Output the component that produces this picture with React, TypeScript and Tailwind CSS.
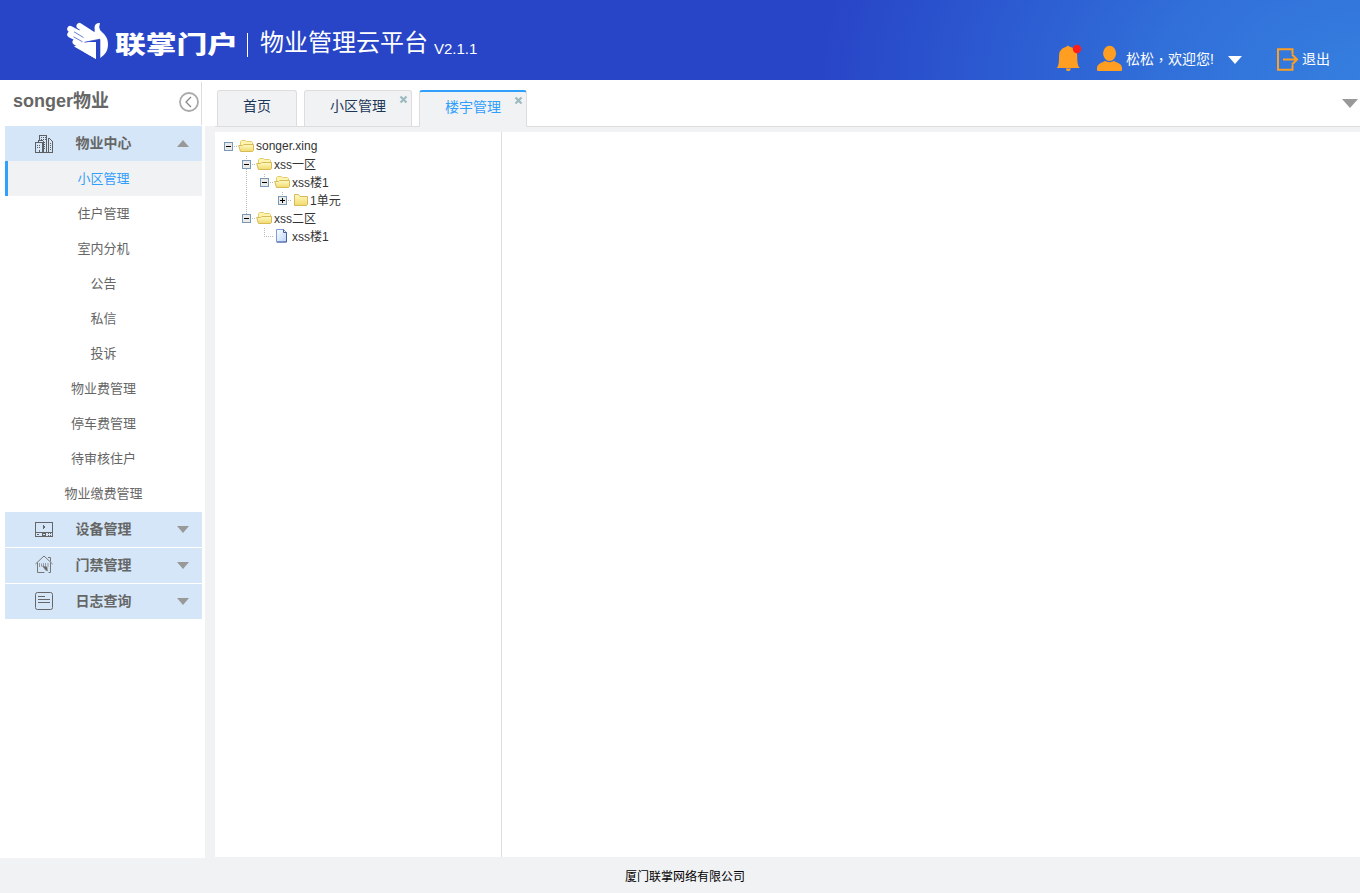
import React from "react";

const menu = ["小区管理", "住户管理", "室内分机", "公告", "私信", "投诉", "物业费管理", "停车费管理", "待审核住户", "物业缴费管理"];

function HandLogo() {
  return (
    <svg className="h-[37px] w-[42px] shrink-0" viewBox="0 0 42 37" fill="#fff">
      <path d="M12.500 4L28 14M3.200 7L22 17M3.200 12.500L22 22M8.500 20L24 28" stroke="#fff" strokeWidth="6" strokeLinecap="round" />
      <path d="M14 6L25.500 12Q28.500 11 27.500 6 27.500 .8 33 1 31.500 5 33 8C37 12 41 15 41 22 41 29 38 33 33 36V17L29 20V37L7 24.500 17 20 9 14Z" />
      <path d="M7 9.800l9.500 5.700M6.500 14.800l9 5" stroke="#2845c7" strokeWidth=".7" />
      <path d="M18.500 20L33.300 17.200v18.600l-3.300.9V20Z" fill="#2845c7" />
      <path d="M17 20.500l12 .5v16l-12-7z" />
      <path d="M17.500 20.300L33 17.200" stroke="#2845c7" strokeWidth=".8" />
    </svg>
  );
}

function BuildingIcon() {
  return (
    <svg className="size-[18px]" viewBox="0 0 18 18" fill="none" stroke="#5c5f63" shapeRendering="crispEdges">
      <path d="M.5 17.500V7.500h7v10zM3.500 7V5.500h4M4.500 5V.5h7v17M8.500 17V6M13.500 17V2.500M14 3.500h1M15 4.500h1M16 5.500h1M17.500 6v11.500H8" />
      <path d="M6 2.500h5M6 4.500h5" strokeDasharray="1 1" />
      <path d="M2 10.500h4M2 12.500h4M9 7.500h2M9 9.500h2M9 11.500h2M9 13.500h2M15 8.500h2M15 10.500h2M15 12.500h2M15 14.500h2" strokeDasharray="1 1" />
      <path d="M4 15v2" />
    </svg>
  );
}

function DeviceIcon() {
  return (
    <svg className="size-[18px]" viewBox="0 0 18 18" fill="none" stroke="#666" shapeRendering="crispEdges">
      <path d="M.5 1.500h17v14H.5zM.5 11.500h17M2 13.500h2M7.500 12.500h3v2h-3zM13 12.500h1M15 12.500h1M13 14.500h1M15 14.500h1" />
      <path d="M8 4v4l3-2z" fill="#666" stroke="none" />
    </svg>
  );
}

function HouseIcon() {
  return (
    <svg className="-mt-0.5 size-[19px]" viewBox="0 0 19 19" fill="none" stroke="#777">
      <path d="M.5 9L9 1l8.500 8M2.500 7.500v10h7M15.500 7.500v10h-2M13 2.500h2.500v4" />
      <path d="M4.500 8v4M6.500 8.500v3M8.500 8v3M10.500 8v4M13 8v4" strokeWidth=".7" />
      <path d="M7.500 11l4.500 1 .5 4-2-1z" fill="#666" strokeWidth=".5" />
    </svg>
  );
}

function LogIcon() {
  return (
    <svg className="-mt-px size-[18px]" viewBox="0 0 18 18" fill="none" stroke="#666">
      <rect x=".5" y=".5" width="17" height="17" rx="2" />
      <path d="M3 4.500h7M3 7.500h12M3 10.500h12" />
    </svg>
  );
}

function Triangle({ up = false }: { up?: boolean }) {
  return (
    <svg className="h-[7px] w-3" viewBox="0 0 12 7" fill="#999">
      <path d={up ? "M0 7L6 0l6 7z" : "M0 0h12L6 7z"} />
    </svg>
  );
}

function Section({ icon, label, up = false }: { icon: React.ReactNode; label: string; up?: boolean }) {
  return (
    <div className="flex h-[35px] items-center bg-[#d5e6f8] pl-[30px] pr-[13px] text-[14px] font-bold text-[#666]">
      <span className="flex w-[40.5px] items-center">{icon}</span>
      <span className="flex-1">{label}</span>
      <Triangle up={up} />
    </div>
  );
}

function CloseIcon() {
  return (
    <svg className="absolute right-[3px] top-1 size-[9px]" viewBox="0 0 9 9" stroke="#9cbac0" strokeWidth="2.200">
      <path d="M1.500 1.500l6 6M7.500 1.500l-6 6" />
    </svg>
  );
}

function Folder({ open = false }: { open?: boolean }) {
  return (
    <svg className="h-4 w-4" viewBox="0 0 16 16">
      <defs>
        <linearGradient id="folder" x2="0" y2="1">
          <stop stopColor="#fffac3" />
          <stop offset="1" stopColor="#f0d96c" />
        </linearGradient>
      </defs>
      {open ? (
        <>
          <path d="M2.500 10V3.500l1-1h4l1 1h5l1 1V13z" fill="#fff4ad" stroke="#e3cd70" />
          <path d="M.7 7.500h4l1-1h9.800v6l-1 1H2.500z" fill="url(#folder)" stroke="#d6bb58" />
        </>
      ) : (
        <path d="M2.500 13.500v-11h4l1.500 2h7.500v8l-1 1z" fill="url(#folder)" stroke="#d6bb58" />
      )}
    </svg>
  );
}

function FileIcon() {
  return (
    <svg className="h-4 w-4" viewBox="0 0 16 16">
      <defs>
        <linearGradient id="file" x2="1" y2="1">
          <stop stopColor="#fff" />
          <stop offset="1" stopColor="#b9d3f8" />
        </linearGradient>
      </defs>
      <path d="M2.500 1.500h7l3 3v9.500h-10z" fill="url(#file)" stroke="#7f9bd0" />
      <path d="M9.500 1.500v3h3v9.500H3" fill="none" stroke="#47619f" />
    </svg>
  );
}

function Toggle({ plus = false, guide = "" }: { plus?: boolean; guide?: string }) {
  return (
    <svg className="h-[18px] w-[18px]" viewBox="0 0 18 18" shapeRendering="crispEdges">
      <path d={"M14 9.500h4" + guide} stroke="#bbb" strokeDasharray="1 1" />
      <rect x="4.500" y="5.500" width="8" height="8" fill="#eceae6" stroke="#7898b8" />
      <path d={plus ? "M6 9.500h5M8.500 7v5" : "M6 9.500h5"} stroke="#000" />
    </svg>
  );
}

function Node({ label, toggle, folder, lines, indent }: { label: string; toggle: React.ReactNode; folder: React.ReactNode; lines?: string; indent: string }) {
  return (
    <div className="flex h-[18px] items-center">
      <svg className={`${indent} h-[18px] shrink-0`} fill="none" shapeRendering="crispEdges">
        {lines && <path d={lines} stroke="#bbb" strokeDasharray="1 1" />}
      </svg>
      {toggle}
      <span className="mr-0.5 flex">{folder}</span>
      <span className={label === "songer.xing" ? "whitespace-nowrap text-[12px] leading-[18px] text-[#333]" : "whitespace-nowrap pt-px text-[12px] leading-[18px] text-[#333]"}>{label}</span>
    </div>
  );
}

export default function App() {
  return (
    <div className="flex h-[893px] w-[1360px] flex-col overflow-hidden bg-[#f1f2f4] font-['Liberation_Sans','Noto_Sans_CJK_SC',sans-serif]">
      <header className="flex h-20 shrink-0 bg-[#2845c7] bg-[radial-gradient(ellipse_560px_350px_at_1380px_80px,#3580df_0%,#316fd9_40%,#2b56cf_75%,#2845c7_100%)] text-white">
        <div className="flex h-full items-start pl-[67px] pt-[22px]">
          <HandLogo />
          <div className="ml-[6px] mt-1.5 h-[38px] w-[121px]">
            <span className="block origin-left scale-x-[1.28] whitespace-nowrap text-[24px] font-black leading-[34px]">联掌门户</span>
          </div>
          <span className="ml-[11px] mt-[11px] h-6 w-px bg-white" />
          <span className="ml-3 mt-[3px] text-[24px] leading-[36px]">物业管理云平台</span>
          <span className="ml-1.5 mt-[17px] text-[15px] leading-5">V2.1.1</span>
        </div>
        <div className="ml-auto flex items-start pt-[44px] text-[14px] leading-[30px]">
          <svg className="mr-px h-[27px] w-[26px]" viewBox="0 0 26 27">
            <path d="M.7 24c3-3 2-9 2.500-14 .5-4 4-6.500 7-7.300L12 1.500l1.800 1.200c4 1 7 3.300 7.300 7.300.4 5-.3 11 2.700 14zM9.700 24.500H15l-1 2q-1.500 1-3.500 0z" fill="#ff9e20" />
            <circle cx="21" cy="5" r="4.200" fill="#ff1c1c" />
          </svg>
          <svg className="ml-[14px] h-[27px] w-[26px]" viewBox="0 0 26 27" fill="#ff9e20">
            <ellipse cx="12.600" cy="9.300" rx="6.500" ry="7.600" />
            <path d="M0 26v-2c0-4 5-5.500 8-7 3 1.500 6 1.500 9 0 4 2 8 3 8 7v2q0 1-1 1H1q-1 0-1-1z" />
          </svg>
          <span className="ml-[3px] flex w-[102px]"><span>松松</span><span className="font-['Noto_Sans_CJK_TC',sans-serif]" lang="zh-TW">，</span><span>欢迎您!</span></span>
          <svg className="mt-[12px] h-2 w-[14px]" viewBox="0 0 14 8" fill="#fff"><path d="M0 0h14L7 8z" /></svg>
          <svg className="ml-[35px] mt-1 h-[23px] w-[21px]" viewBox="0 0 21 23" fill="none" stroke="#ff9e20" strokeWidth="2">
            <path d="M15.500 6V1.200H1v20.500h14.500V17M6 11.500h14M15 6.500l5 5-5 5" />
          </svg>
          <span className="ml-1 mr-[30px]">退出</span>
        </div>
      </header>

      <main className="flex h-[778px] shrink-0">
        <aside className="w-[205px] bg-white">
          <div className="flex h-[46px] w-[202px] pt-0.5">
            <div className="flex h-[43px] w-full border-r border-[#ddd] pl-[13px] pr-0.5">
              <span className="flex-1 pt-1.5 text-[18px] font-bold leading-[27px] text-[#666]">songer物业</span>
              <svg className="mt-[10px] size-5" viewBox="0 0 20 20" fill="none" stroke="#aaa" strokeWidth="1.800">
                <circle cx="10" cy="10" r="9" /><path d="M12 5L7 10l5 5" strokeWidth="1.300" stroke="#888" />
              </svg>
            </div>
          </div>
          <nav className="ml-[5px] w-[197px]">
            <Section icon={<BuildingIcon />} label="物业中心" up />
            {menu.map((item, i) => (
              <div key={item} className={i === 0 ? "flex h-[35px] items-center justify-center border-l-[3px] border-[#319ffc] bg-[#f1f2f4] pr-[3px] text-[13px] text-[#319ffc]" : "flex h-[35px] items-center justify-center text-[13px] text-[#666]"}>
                {item}
              </div>
            ))}
            <div className="flex flex-col gap-px pt-px">
              <Section icon={<DeviceIcon />} label="设备管理" />
              <Section icon={<HouseIcon />} label="门禁管理" />
              <Section icon={<LogIcon />} label="日志查询" />
            </div>
          </nav>
        </aside>

        <div className="flex flex-1 flex-col">
          <div className="flex h-[47px] bg-white">
            <div className="mt-[46px] w-[10px] bg-[#f1f2f4]" />
            <div className="flex flex-1 items-end border-b border-[#ddd] pl-0.5 text-[14px] text-[#1c3658]">
              <div className="mr-[7px] h-9 w-20 rounded-t-[3px] border border-b-0 border-[#ddd] bg-[#f1f2f4] text-center leading-[30px]">首页</div>
              <div className="relative mr-[7px] h-9 w-[108px] rounded-t-[3px] border border-b-0 border-[#ddd] bg-[#f1f2f4] text-center leading-[30px]">小区管理<CloseIcon /></div>
              <div className="relative -mb-px h-[37px] w-[108px] rounded-t-[3px] border border-b-0 border-t-2 border-[#ddd] border-t-[#319ffc] bg-[#f1f2f4] text-center leading-[30px] text-[#319ffc]">楼宇管理<CloseIcon /></div>
              <svg className="mb-[18px] ml-auto mr-0.5 h-[9px] w-4" viewBox="0 0 16 9" fill="#999"><path d="M0 0h16L8 9z" /></svg>
            </div>
          </div>
          <div className="flex flex-1 pb-px pl-[10px] pt-[5px]">
            <div className="w-[287px] border-r border-[#ddd] bg-white pl-[5px] pt-[5px]">
              <Node indent="w-0" label="songer.xing" toggle={<Toggle />} folder={<Folder open />} />
              <Node indent="w-[18px]" label="xss一区" toggle={<Toggle guide="M8.500 1V5M8.500 14V18" />} folder={<Folder open />} />
              <Node indent="w-[36px]" lines="M26.500 0V18" label="xss楼1" toggle={<Toggle guide="M8.500 1V5" />} folder={<Folder open />} />
              <Node indent="w-[54px]" lines="M26.500 0V18" label="1单元" toggle={<Toggle plus guide="M8.500 1V5" />} folder={<Folder />} />
              <Node indent="w-[18px]" label="xss二区" toggle={<Toggle guide="M8.500 0V5" />} folder={<Folder open />} />
              <Node indent="w-[54px]" lines="M44.500 1V9.500H54" label="xss楼1" toggle={null} folder={<FileIcon />} />
            </div>
            <div className="flex-1 bg-white" />
          </div>
        </div>
      </main>
      <footer className="flex-1 pl-[10px] pt-[10px] text-center text-[12px] leading-[18px] text-black">厦门联掌网络有限公司</footer>
    </div>
  );
}
